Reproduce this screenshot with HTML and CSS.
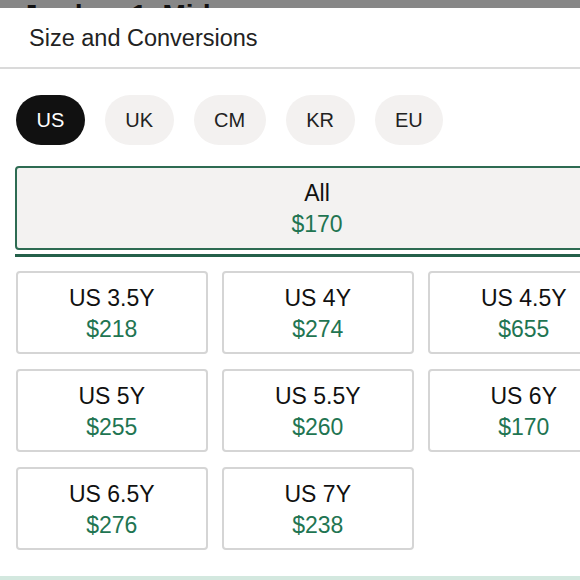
FILE: index.html
```html
<!DOCTYPE html>
<html>
<head>
<meta charset="utf-8">
<link rel="stylesheet" href="styles.css">
</head>
<body>
<div class="topbar"><span class="topbar-text">Jordan 1 Mid</span></div>
<div class="sheet">
  <div class="header">Size and Conversions</div>
  <div class="content">
    <div class="pills">
      <span class="pill pill-active">US</span>
      <span class="pill">UK</span>
      <span class="pill">CM</span>
      <span class="pill">KR</span>
      <span class="pill">EU</span>
    </div>
    <div class="all-box">
      <div class="size">All</div>
      <div class="price">$170</div>
    </div>
    <div class="all-bar"></div>
    <div class="grid">
      <div class="cell"><div class="size">US 3.5Y</div><div class="price">$218</div></div>
      <div class="cell"><div class="size">US 4Y</div><div class="price">$274</div></div>
      <div class="cell"><div class="size">US 4.5Y</div><div class="price">$655</div></div>
      <div class="cell"><div class="size">US 5Y</div><div class="price">$255</div></div>
      <div class="cell"><div class="size">US 5.5Y</div><div class="price">$260</div></div>
      <div class="cell"><div class="size">US 6Y</div><div class="price">$170</div></div>
      <div class="cell"><div class="size">US 6.5Y</div><div class="price">$276</div></div>
      <div class="cell"><div class="size">US 7Y</div><div class="price">$238</div></div>
    </div>
  </div>
  <div class="footer-line"></div>
</div>
</body>
</html>
```
FILE: styles.css
```css
html, body {
  margin: 0;
  padding: 0;
  overflow: hidden;
  background: #ffffff;
}
body {
  width: 580px;
  height: 580px;
  font-family: "Liberation Sans", Arial, sans-serif;
  color: #111111;
}
.topbar {
  box-sizing: border-box;
  height: 8px;
  background: #878787;
  overflow: hidden;
  padding: 2px 0 0 22px;
}
.topbar-text {
  display: block;
  font-size: 28px;
  font-weight: 700;
  line-height: 26px;
  color: #111;
  word-spacing: 8px;
  white-space: nowrap;
}
.sheet {
  background: #ffffff;
}
.header {
  padding: 16px 0 15px 29px;
  font-size: 23.5px;
  line-height: 28px;
  color: #222222;
  border-bottom: 2px solid #dadada;
}
.content {
  padding: 26px 0 0 15px;
  width: 604px;
}
.pills {
  display: flex;
  gap: 20px;
  padding-left: 1px;
}
.pill {
  height: 50px;
  line-height: 50px;
  padding: 0 20.5px;
  border-radius: 25px;
  background: #f3f1f0;
  color: #222;
  font-size: 20px;
}
.pill-active {
  background: #111111;
  color: #ffffff;
}
.all-box {
  margin-top: 21px;
  box-sizing: border-box;
  height: 84px;
  width: 604px;
  border: 2px solid #2d6b52;
  border-radius: 4px;
  background: #f3f2f1;
  padding-top: 10px;
  text-align: center;
}
.all-bar {
  margin-top: 4px;
  height: 3px;
  width: 604px;
  background: #24604a;
}
.grid {
  margin: 14px 0 0 1px;
  display: grid;
  grid-template-columns: repeat(3, 191.5px);
  column-gap: 14.5px;
  row-gap: 15px;
}
.cell {
  box-sizing: border-box;
  height: 83px;
  border: 2px solid #d5d5d5;
  border-radius: 4px;
  padding-top: 10px;
  text-align: center;
}
.size {
  font-size: 23px;
  line-height: 31px;
  color: #111111;
}
.price {
  font-size: 23px;
  line-height: 31px;
  color: #1f7552;
}
.footer-line {
  margin-top: 26px;
  height: 4px;
  background: #d3e8df;
}
```
